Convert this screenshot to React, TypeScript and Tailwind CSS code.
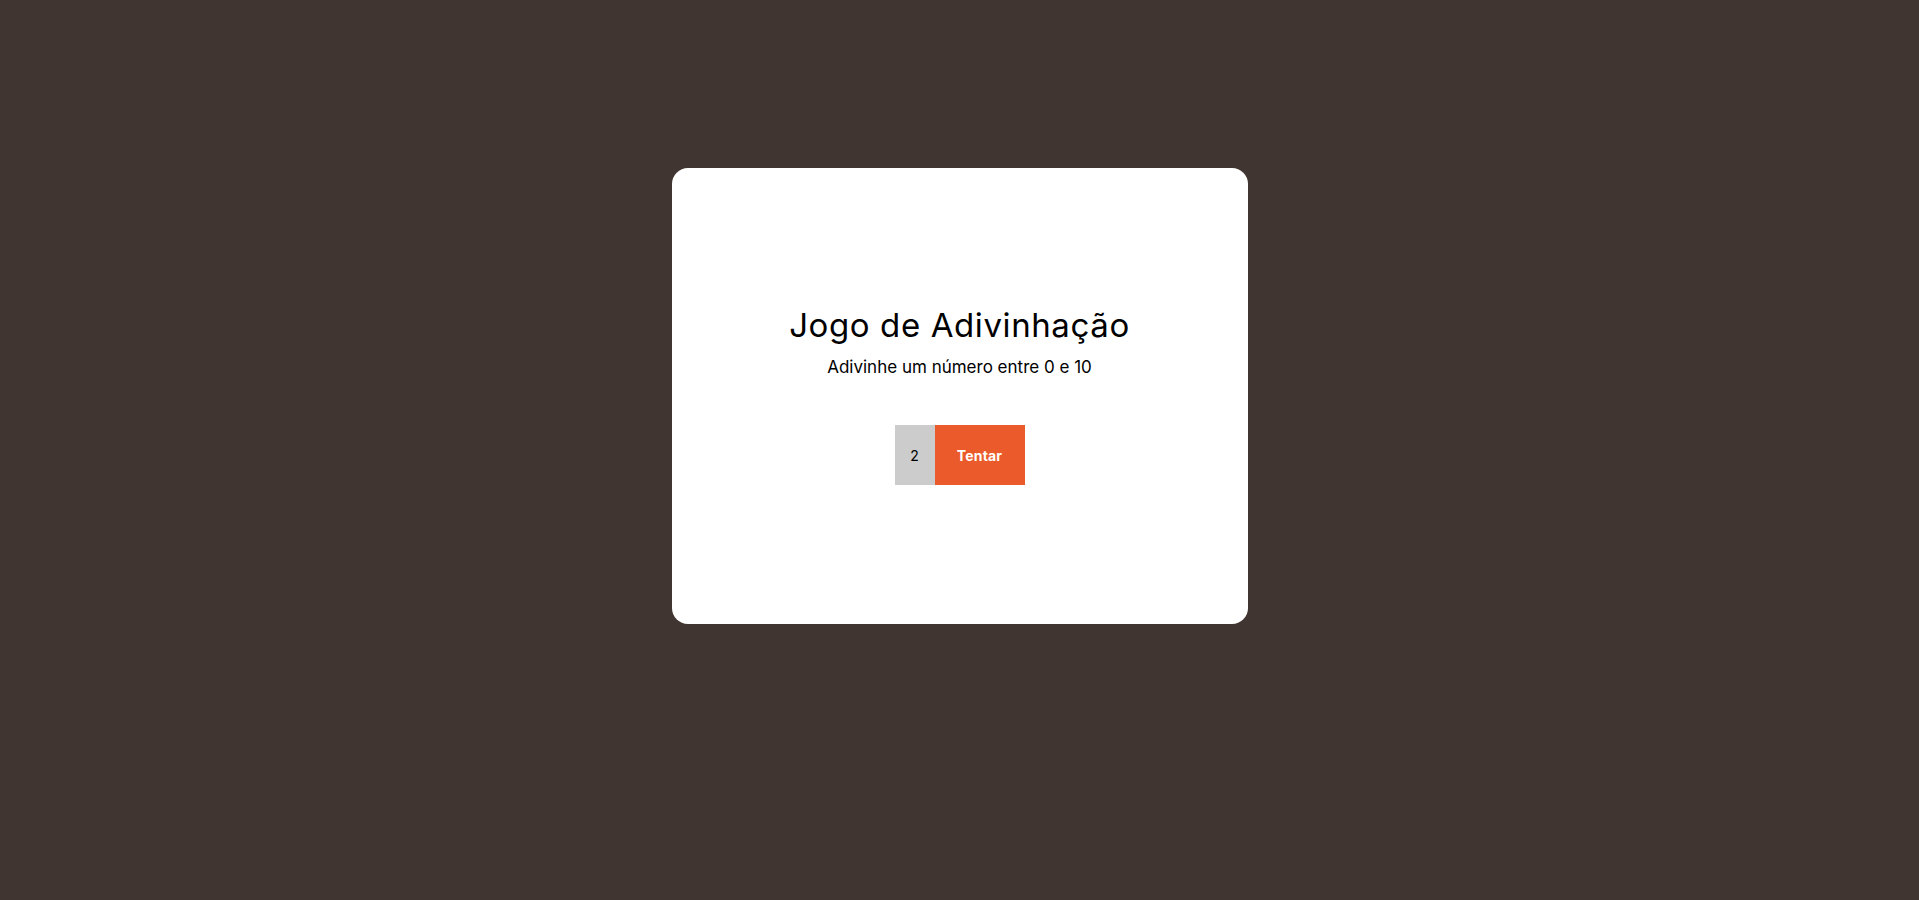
import React, { useState } from "react";

export default function App() {
  const [val, setVal] = useState("2");
  return (
    <div
      className="min-h-[900px] w-full bg-[#413531] flex justify-center pt-[168px]"
      style={{ fontFamily: "Inter, 'Open Sans', sans-serif" }}
    >
      <div className="w-[576px] h-[456px] bg-white rounded-[16px] flex flex-col items-center pt-[133px]">
        <h1 className="text-[33px] leading-[48px] font-normal text-black tracking-[0.6px]">
          Jogo de Adivinhação
        </h1>
        <p className="mt-[5px] text-[17px] leading-[27px] text-black">
          Adivinhe um número entre 0 e 10
        </p>
        <div className="mt-[44px] flex">
          <input
            value={val}
            onChange={(e) => setVal(e.target.value)}
            className="w-[40px] h-[60px] bg-[#cccccc] text-center text-[14px] text-black outline-none border-0"
          />
          <button className="w-[90px] h-[60px] bg-[#eb5a2a] text-white text-[14px] font-bold tracking-[0.2px]">
            Tentar
          </button>
        </div>
      </div>
    </div>
  );
}
